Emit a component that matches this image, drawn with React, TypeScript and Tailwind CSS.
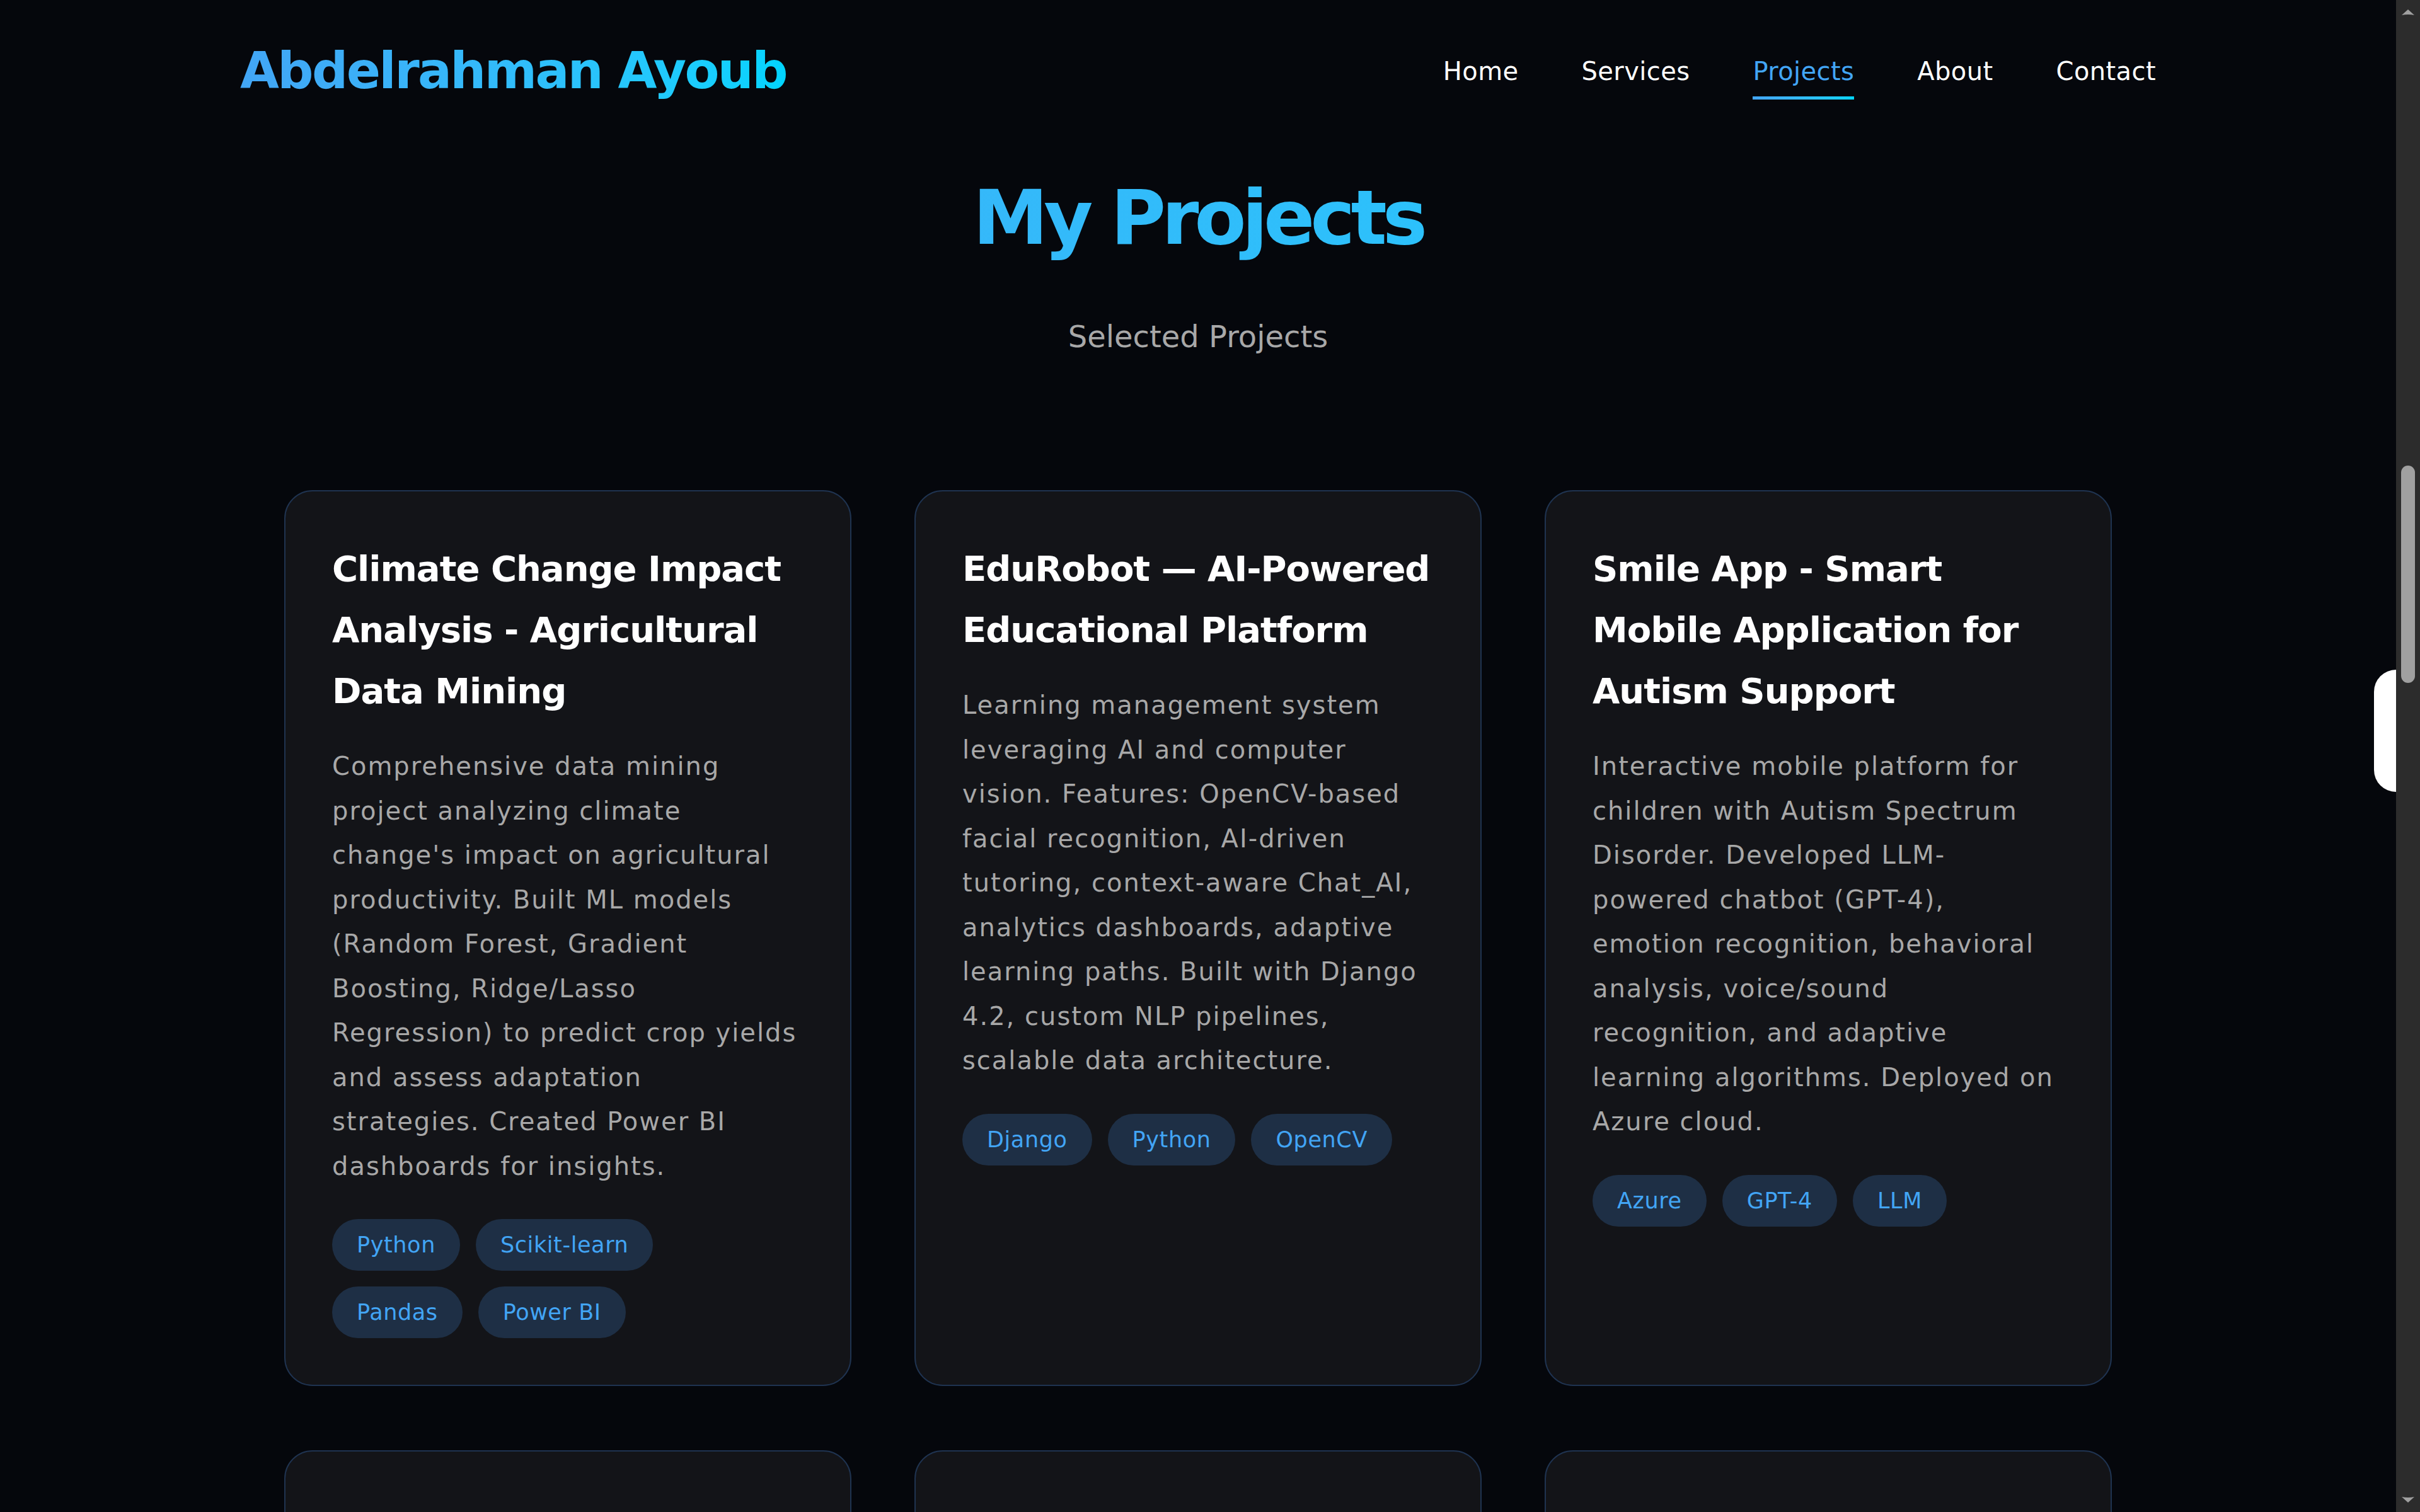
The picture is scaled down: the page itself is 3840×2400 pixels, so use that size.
import React from "react";

type Project = {
  title: string;
  lines: string[];
  tags: string[];
};

const NAV = ["Home", "Services", "Projects", "About", "Contact"];

// description lines kept as they break on the live site
const PROJECTS: Project[] = [
  {
    title: "Climate Change Impact Analysis - Agricultural Data Mining",
    lines: [
      "Comprehensive data mining",
      "project analyzing climate",
      "change's impact on agricultural",
      "productivity. Built ML models",
      "(Random Forest, Gradient",
      "Boosting, Ridge/Lasso",
      "Regression) to predict crop yields",
      "and assess adaptation",
      "strategies. Created Power BI",
      "dashboards for insights.",
    ],
    tags: ["Python", "Scikit-learn", "Pandas", "Power BI"],
  },
  {
    title: "EduRobot — AI-Powered Educational Platform",
    lines: [
      "Learning management system",
      "leveraging AI and computer",
      "vision. Features: OpenCV-based",
      "facial recognition, AI-driven",
      "tutoring, context-aware Chat_AI,",
      "analytics dashboards, adaptive",
      "learning paths. Built with Django",
      "4.2, custom NLP pipelines,",
      "scalable data architecture.",
    ],
    tags: ["Django", "Python", "OpenCV"],
  },
  {
    title: "Smile App - Smart Mobile Application for Autism Support",
    lines: [
      "Interactive mobile platform for",
      "children with Autism Spectrum",
      "Disorder. Developed LLM-",
      "powered chatbot (GPT-4),",
      "emotion recognition, behavioral",
      "analysis, voice/sound",
      "recognition, and adaptive",
      "learning algorithms. Deployed on",
      "Azure cloud.",
    ],
    tags: ["Azure", "GPT-4", "LLM"],
  },
];

function ProjectCard({ project }: { project: Project }) {
  return (
    <div className="rounded-[45px] border-2 border-[#1f3350] bg-[#131418] p-[74px]">
      <h3 className="mb-[36px] text-[56px] font-bold leading-[97px] tracking-[-1px] text-white">
        {project.title}
      </h3>
      <p className="mb-[49px] text-[40px] leading-[70.5px] tracking-[2px] text-[#a8a8a8]">
        {project.lines.map((line, i) => (
          <span key={i} className="block whitespace-nowrap">
            {line}
          </span>
        ))}
      </p>
      <div className="flex max-w-[720px] flex-wrap gap-[25px]">
        {project.tags.map((tag) => (
          <span
            key={tag}
            className="rounded-full bg-[#1e2f45] px-[39px] py-[15px] text-[35px] leading-[52px] tracking-[0.6px] text-[#42a5f5]"
          >
            {tag}
          </span>
        ))}
      </div>
    </div>
  );
}

export default function App() {
  return (
    <div className="flex h-screen overflow-hidden bg-[#05070c] font-['DejaVu_Sans',sans-serif]">
      <div className="relative min-w-0 flex-1">
        {/* Header */}
        <header className="flex h-[226px] items-center justify-between px-[381px]">
          <span className="bg-linear-to-r from-[#42a5f5] to-[#00d4ff] bg-clip-text text-[80px] font-bold leading-[96px] tracking-[-2.6px] text-transparent">
            Abdelrahman Ayoub
          </span>
          <nav className="flex gap-[100px]">
            {NAV.map((item) => (
              <a
                key={item}
                className={`relative text-[40px] leading-[60px] tracking-[0.4px] ${
                  item === "Projects" ? "text-[#42a5f5]" : "text-white"
                }`}
              >
                {item}
                {item === "Projects" && (
                  <span className="absolute bottom-[-15px] left-0 right-0 h-[5px] bg-linear-to-r from-[#42a5f5] to-[#00d4ff]" />
                )}
              </a>
            ))}
          </nav>
        </header>

        {/* Projects */}
        <section className="pt-[48px]">
          <h2 className="bg-linear-to-r from-[#42a5f5] to-[#00d4ff] bg-clip-text text-center text-[120px] font-bold leading-[144px] tracking-[-7px] text-transparent">
            My Projects
          </h2>
          <p className="mt-[80px] text-center text-[48px] leading-[72px] text-[#a8a8a8]">
            Selected Projects
          </p>

          <div className="mx-auto mt-[208px] grid w-[2900px] grid-cols-3 gap-x-[100px] gap-y-[102px]">
            {PROJECTS.map((p) => (
              <ProjectCard key={p.title} project={p} />
            ))}
            <div className="h-[1420px] rounded-[45px] border-2 border-[#1f3350] bg-[#131418]" />
            <div className="h-[1420px] rounded-[45px] border-2 border-[#1f3350] bg-[#131418]" />
            <div className="h-[1420px] rounded-[45px] border-2 border-[#1f3350] bg-[#131418]" />
          </div>
        </section>

        {/* floating side tab */}
        <div className="absolute right-0 top-[1063px] h-[194px] w-[35px] rounded-l-[35px] bg-white" />
      </div>

      {/* Scrollbar */}
      <div className="flex w-[38px] shrink-0 flex-col items-center bg-[#2c2c2c]">
        <svg className="mt-[12px]" width="24" height="14" viewBox="0 0 24 14">
          <path d="M12 3 L22 12 Q12 10 2 12 Z" fill="#a0a0a0" />
        </svg>
        <div className="mt-[713px] h-[345px] w-[22px] rounded-full bg-[#a0a0a0]" />
        <div className="flex-1" />
        <svg className="mb-[12px]" width="24" height="14" viewBox="0 0 24 14">
          <path d="M12 11 L22 2 Q12 4 2 2 Z" fill="#a0a0a0" />
        </svg>
      </div>
    </div>
  );
}
